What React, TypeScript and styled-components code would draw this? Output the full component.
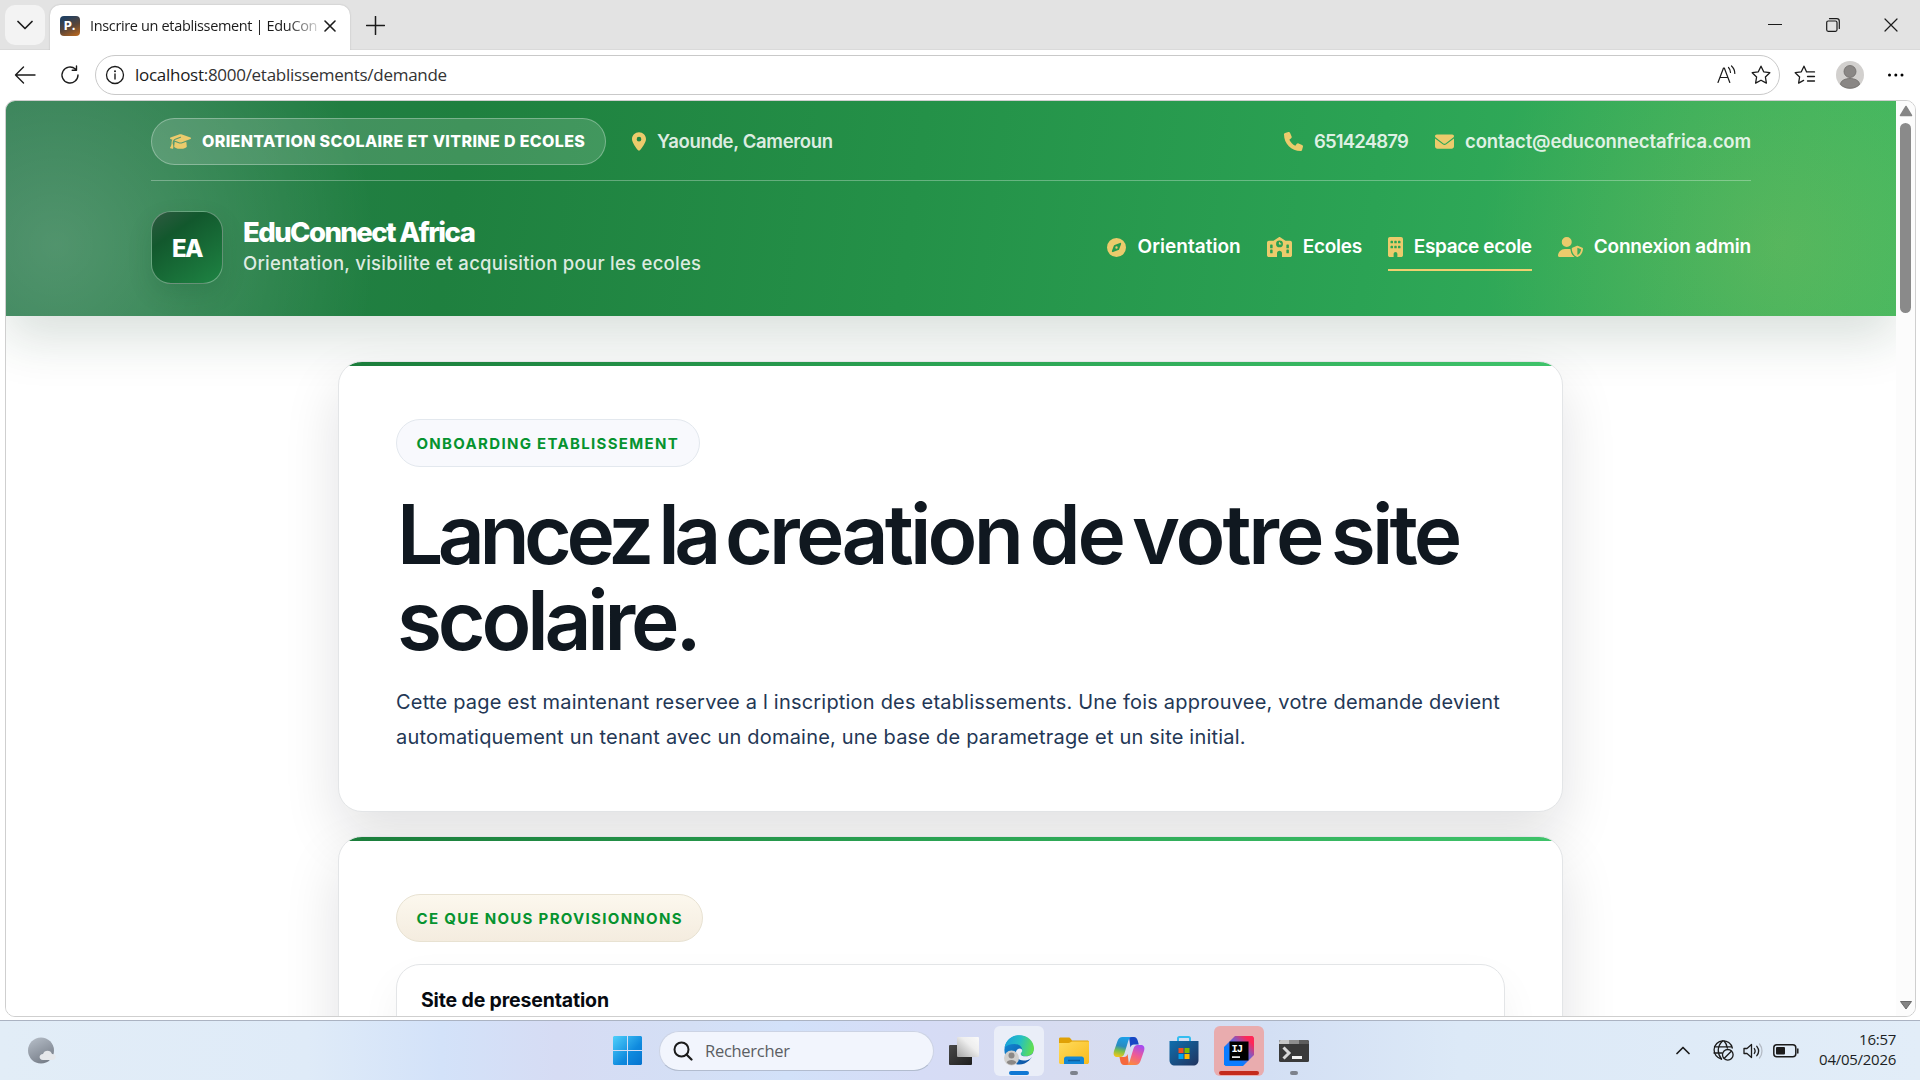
import React from "react";
import styled, { createGlobalStyle } from "styled-components";
import {
  FaGraduationCap,
  FaLocationDot,
  FaPhone,
  FaEnvelope,
  FaCompass,
  FaSchool,
  FaBuilding,
  FaUserShield,
} from "react-icons/fa6";

const GlobalStyle = createGlobalStyle`
  *, *::before, *::after { box-sizing: border-box; }
  body { margin: 0; background: #fff; overflow: hidden; font-family: Inter, sans-serif; }
`;

const ui = `"Open Sans", "Noto Sans", sans-serif`;

const Desktop = styled.div`
  width: 1920px;
  height: 1080px;
  display: flex;
  flex-direction: column;
  overflow: hidden;
`;

const Browser = styled.div`
  height: 1020px;
  display: flex;
  flex-direction: column;
  background: #fff;
`;

/* ---------- tab strip ---------- */
const TabStrip = styled.div`
  height: 50px;
  flex: none;
  display: flex;
  align-items: flex-start;
  background: #e3e3e3;
  border-bottom: 1px solid #dadada;
  padding: 5px 0 0 5px;
`;

const TabMenu = styled.div`
  width: 40px;
  height: 40px;
  border-radius: 10px;
  background: #f3f3f3;
  display: grid;
  place-items: center;
`;

const Tab = styled.div`
  width: 300px;
  height: 45px;
  margin-left: 5px;
  padding: 0 13px 4px 10px;
  border-radius: 10px 10px 0 0;
  background: #fff;
  box-shadow: 0 0 2px rgba(0, 0, 0, 0.2);
  clip-path: inset(-3px -3px 0 -3px);
  display: flex;
  align-items: center;
`;

const Favicon = styled.div`
  width: 20px;
  height: 20px;
  border-radius: 4px;
  background: linear-gradient(155deg, #23405f 15%, #5b4638 55%, #c26a1c 100%);
  color: #fff;
  font: 800 12px/19px Inter, sans-serif;
  display: flex;
  justify-content: center;
  letter-spacing: 0.3px;
`;

const TabTitle = styled.div`
  width: 229px;
  margin-left: 10px;
  white-space: nowrap;
  font: 400 14.5px/22px ${ui};
  letter-spacing: -0.35px;
  color: #1b1b1b;
  mask-image: linear-gradient(90deg, #000 86%, rgba(0, 0, 0, 0.15) 100%);
`;

const TabClose = styled.div`
  width: 14px;
  height: 14px;
  display: grid;
  place-items: center;
  margin-left: 4px;
`;

const NewTab = styled.div`
  width: 20px;
  height: 40px;
  margin-left: 15px;
  display: grid;
  place-items: center;
`;

const WindowControls = styled.div`
  margin-left: auto;
  margin-right: 22px;
  height: 40px;
  display: flex;
  align-items: center;
  gap: 44px;
`;

/* ---------- toolbar ---------- */
const Toolbar = styled.div`
  height: 50px;
  flex: none;
  display: flex;
  align-items: center;
  padding: 0 12px 0 14px;
`;

const ToolIcon = styled.div<{ $w: number; $ml?: number }>`
  width: ${(p) => p.$w}px;
  margin-left: ${(p) => p.$ml ?? 0}px;
  display: flex;
  justify-content: center;
  flex: none;
`;

const AddressBar = styled.div`
  width: 1685px;
  height: 40px;
  margin-left: 15px;
  border: 1px solid #c9c9c9;
  border-radius: 20px;
  display: flex;
  align-items: center;
  padding: 0 8px 0 9px;
`;

const Url = styled.div`
  margin-left: 10px;
  flex: 1;
  font: 400 17px/24px ${ui};
  letter-spacing: -0.28px;
  color: #333;
  span { color: #1a1a1a; }
`;

const Avatar = styled.div`
  width: 28px;
  height: 28px;
  margin-left: 20px;
  flex: none;
`;

/* ---------- page frame ---------- */
const Frame = styled.div`
  margin: 0 4px 0 5px;
  height: 917px;
  border: 1px solid #cfcfcf;
  border-radius: 10px;
  overflow: hidden;
  display: flex;
`;

const Page = styled.main`
  width: 1890px;
  flex: none;
  height: 100%;
  overflow: hidden;
  background: #fff;
`;

const ScrollBar = styled.div`
  flex: 1;
  background: #fcfcfc;
  display: flex;
  flex-direction: column;
  align-items: center;
  padding: 4px 0 6px;
`;

const Thumb = styled.div`
  width: 11px;
  height: 190px;
  margin-top: 6px;
  border-radius: 6px;
  background: #8a8a8a;
`;

const Spacer = styled.div`
  flex: 1;
`;

/* ---------- site header ---------- */
const SiteHeader = styled.header`
  height: 215px;
  padding: 17px 145px 0;
  background:
    radial-gradient(circle at 50px 144px, rgba(255, 255, 255, 0.2), rgba(255, 255, 255, 0) 320px),
    radial-gradient(circle at 1775px 144px, rgba(246, 200, 90, 0.17), rgba(246, 200, 90, 0) 300px),
    linear-gradient(98deg, #27784a 0%, #1f803f 24%, #249148 48%, #2ba354 72%, #34af5c 88%, #3ab760 100%);
  box-shadow: 0 22px 48px rgba(16, 60, 35, 0.16);
`;

const TopBar = styled.div`
  height: 63px;
  display: flex;
  align-items: flex-start;
  border-bottom: 1px solid rgba(255, 255, 255, 0.3);
`;

const Pill = styled.div`
  width: 455px;
  height: 47px;
  border: 1px solid rgba(255, 255, 255, 0.3);
  border-radius: 24px;
  background: rgba(255, 255, 255, 0.15);
  display: flex;
  align-items: center;
  padding: 0 0 1px 18px;
  color: #fff;
  font: 800 16px/20px Inter, sans-serif;
  letter-spacing: 0.36px;
  white-space: nowrap;
`;

const Gold = styled.span<{ $w: number; $h: number }>`
  width: ${(p) => p.$w}px;
  margin-right: 11px;
  display: inline-flex;
  justify-content: center;
  flex: none;
  color: #eccb6c;
  svg {
    width: ${(p) => p.$w}px;
    height: ${(p) => p.$h}px;
  }
`;

const Info = styled.div<{ $ml?: number; $ls: number }>`
  height: 46px;
  margin-left: ${(p) => (p.$ml === undefined ? "auto" : `${p.$ml}px`)};
  display: flex;
  align-items: center;
  color: rgba(255, 255, 255, 0.86);
  font: 600 18.5px/24px Inter, sans-serif;
  letter-spacing: ${(p) => p.$ls}px;
  white-space: nowrap;
`;

const MainBar = styled.div`
  display: flex;
  align-items: center;
  height: 73px;
  margin-top: 30px;
`;

const Logo = styled.div`
  width: 72px;
  height: 73px;
  border-radius: 20px;
  border: 1px solid rgba(255, 255, 255, 0.34);
  background: linear-gradient(145deg, #2f5a41 0%, #12582d 30%, #1e8443 100%);
  box-shadow: 0 10px 24px rgba(8, 60, 30, 0.14);
  color: #fff;
  font: 800 24px/73px Inter, sans-serif;
  letter-spacing: -1.6px;
  text-align: center;
`;

const Brand = styled.div`
  margin-left: 20px;
  margin-top: -1px;
  white-space: nowrap;
`;

const BrandName = styled.div`
  color: #fff;
  font: 800 27.5px/33px Inter, sans-serif;
  letter-spacing: -1.57px;
`;

const BrandTag = styled.div`
  color: rgba(255, 255, 255, 0.85);
  font: 500 18.5px/29px Inter, sans-serif;
  letter-spacing: 0.27px;
`;

const Nav = styled.nav`
  margin-left: auto;
  display: flex;
  gap: 26px;
`;

const NavItem = styled.a<{ $active?: boolean; $ls?: number }>`
  height: 48px;
  display: flex;
  align-items: center;
  padding-top: 3px;
  border-bottom: 2px solid ${(p) => (p.$active ? "#f0d070" : "transparent")};
  margin-top: -2px;
  color: #fff;
  font: 600 19px/24px Inter, sans-serif;
  letter-spacing: ${(p) => p.$ls ?? 0}px;
  white-space: nowrap;
`;

/* ---------- content ---------- */
const Content = styled.section`
  width: 1225px;
  margin: 45px 0 0 332px;
  display: flex;
  flex-direction: column;
  gap: 24px;
`;

const Card = styled.article`
  border: 1px solid #e3e5e7;
  border-radius: 24px;
  background: linear-gradient(90deg, #1b7d3b, #2ba353 50%, #3fc36a) top / 100% 4px no-repeat, #fff;
  box-shadow: 0 24px 56px rgba(15, 20, 25, 0.12);
  padding: 57px 57px 56px;
`;

const Badge = styled.div<{ $warm?: boolean }>`
  width: fit-content;
  height: 48px;
  border: 1px solid ${(p) => (p.$warm ? "#e8e2d2" : "#e3e8ee")};
  border-radius: 24px;
  background: ${(p) => (p.$warm ? "linear-gradient(180deg, #fcf8ee, #f4ecdf)" : "#f8f9fd")};
  padding: 0 ${(p) => (p.$warm ? 19 : 20)}px 0 19.5px;
  color: #06932f;
  font: 700 15px/47px Inter, sans-serif;
  letter-spacing: 1.31px;
`;

const Title = styled.h1`
  margin: 25px 0 21px 1px;
  color: #101820;
  font: 600 82px/86px Inter, sans-serif;
  letter-spacing: -4.2px;
  word-spacing: -7px;
  white-space: nowrap;
`;

const Kern = styled.span<{ $ls: number }>`
  letter-spacing: ${(p) => p.$ls}px;
`;

const Lead = styled.p`
  margin: 0;
  color: #233755;
  font: 400 20px/35px Inter, sans-serif;
  letter-spacing: 0.2px;
  white-space: nowrap;
`;

const Feature = styled.div`
  margin-top: 22px;
  height: 150px;
  border: 1px solid #e3e5e7;
  border-radius: 24px;
  background: #fff;
  box-shadow: 0 18px 40px rgba(15, 20, 25, 0.05);
  padding: 23px 24px;
  color: #060a10;
  font: 700 19.5px/24px Inter, sans-serif;
  letter-spacing: -0.15px;
`;

/* ---------- taskbar ---------- */
const Taskbar = styled.footer`
  height: 60px;
  border-top: 1px solid #abb3c2;
  background: linear-gradient(
    90deg,
    #e2edf7 0%, #dfebf8 16%, #d3e2f9 23%, #d6dcf4 29%, #d4dff5 36%, #d2e1f9 41%,
    #d6dcf6 48%, #d7dcf0 56%, #d3dff4 66%, #dce9f7 76%, #e2edf8 100%
  );
  display: flex;
  align-items: center;
  padding: 0 24px 0 26px;
`;

const Tile = styled.div<{ $bg?: string; $line?: string; $lineW?: number; $ml?: number }>`
  width: 50px;
  height: 50px;
  margin-left: ${(p) => p.$ml ?? 5}px;
  border-radius: 6px;
  background: ${(p) => p.$bg ?? "transparent"};
  display: grid;
  place-items: center;
  position: relative;
  flex: none;
  &::after {
    content: "";
    position: absolute;
    bottom: 1px;
    left: calc(50% - ${(p) => (p.$lineW ?? 0) / 2}px);
    width: ${(p) => p.$lineW ?? 0}px;
    height: 4px;
    border-radius: 2px;
    background: ${(p) => p.$line ?? "transparent"};
  }
`;

const Search = styled.div`
  width: 275px;
  height: 40px;
  margin-left: 7px;
  border: 1px solid #ccd3e4;
  border-bottom-color: #b2bccf;
  border-radius: 20px;
  background: #f2f5fd;
  display: flex;
  align-items: center;
  padding-left: 13px;
  gap: 12px;
  color: #5b5e63;
  font: 400 16.5px/24px ${ui};
  letter-spacing: -0.28px;
`;

const Tray = styled.div`
  margin-left: auto;
  display: flex;
  align-items: center;
`;

const Clock = styled.div`
  width: 97px;
  margin-top: -4px;
  text-align: right;
  color: #1c1f24;
  font: 400 15px/20px ${ui};
  letter-spacing: -0.27px;
`;

const line = { fill: "none", stroke: "#1b1b1b", strokeWidth: 1.5, strokeLinecap: "round", strokeLinejoin: "round" } as const;

const StarPath = "M10 1.2l2.7 5.6 6.1.9-4.4 4.3 1 6.1L10 15.2l-5.4 2.9 1-6.1L1.2 7.7l6.1-.9z";

function EdgeIcon() {
  return (
    <svg width="31" height="31" viewBox="0 0 31 31">
      <defs>
        <linearGradient id="ea" x1="0" y1="0.3" x2="1" y2="0.5">
          <stop offset="0" stopColor="#1aa0dc" />
          <stop offset="0.5" stopColor="#24bfc4" />
          <stop offset="1" stopColor="#63e04c" />
        </linearGradient>
        <linearGradient id="eb" x1="0" y1="0" x2="1" y2="1">
          <stop offset="0" stopColor="#1391dc" />
          <stop offset="1" stopColor="#0c4b9c" />
        </linearGradient>
      </defs>
      <circle cx="15" cy="15" r="14.6" fill="url(#eb)" />
      <path d="M.6 12.5C2 5 8 .3 15.2.3 24 .3 30 6.600 30 13.500c0 5-3.700 7.700-8.200 7.700-3.600 0-5.300-1.400-5-2.700.3-1 1.500-1.600 1.400-3.700C18 11.500 14.700 9 10.500 9 6 9 2.300 10.600.6 12.500z" fill="url(#ea)" />
      <path d="M13.300 14.600c-1.900 2-2 5.400-.3 8 2.600 3.700 9.800 4 14.300.3.900-.7 1.200-.3.600.7C29 21 31 23 31 31l-1-17c0 5-3.700 7.300-8.200 7.300-3.600 0-5.300-1.400-5-2.700.3-1 1.500-1.600 1.400-3-.2-2.400-3-3-4.900-1z" fill="#e9edf7" />
      <circle cx="7.500" cy="23" r="7.500" fill="#d0cfcd" />
      <circle cx="7.500" cy="20.600" r="3" fill="#8b8886" />
      <path d="M2.700 27.500c.6-3.500 9-3.500 9.600 0-2.500 3-7 3-9.600 0z" fill="#8b8886" />
    </svg>
  );
}

function CopilotIcon() {
  return (
    <svg width="32" height="30" viewBox="0 0 32 30">
      <defs>
        <linearGradient id="ca" x1="0.5" y1="0" x2="0.3" y2="1">
          <stop offset="0" stopColor="#1c9fe8" />
          <stop offset="0.45" stopColor="#2a8bc0" />
          <stop offset="0.7" stopColor="#7bbf4a" />
          <stop offset="1" stopColor="#f2c61a" />
        </linearGradient>
        <linearGradient id="cb" x1="0.7" y1="0" x2="0.3" y2="1">
          <stop offset="0" stopColor="#a64cf0" />
          <stop offset="0.5" stopColor="#ef5b94" />
          <stop offset="1" stopColor="#fb8a3c" />
        </linearGradient>
      </defs>
      <path d="M16 1h5c2 0 3 1.500 3.500 3l1.300 4.500H21c-2 0-3 1-3.600 3z" fill="#1747c4" />
      <path d="M16 29h-5c-2 0-3-1.500-3.500-3L6.500 21H11c2 0 3-1 3.600-3z" fill="#f5683c" />
      <path d="M9.500 1H19c-2 0-3 1.600-3.600 3.500L11.600 17c-.8 2.500-2 4-4.300 4H4c-3 0-4-2.500-3-6L4.500 5C5.500 2.300 7 1 9.500 1z" fill="url(#ca)" />
      <path d="M22.500 29H13c2 0 3-1.600 3.600-3.500L20.400 13c.8-2.500 2-4 4.300-4H28c3 0 4 2.500 3 6l-3.500 10c-1 2.700-2.500 4-5 4z" fill="url(#cb)" />
    </svg>
  );
}

export default function App() {
  return (
    <>
      <GlobalStyle />
      <Desktop>
        <Browser>
          <TabStrip>
            <TabMenu>
              <svg width="16" height="10" viewBox="0 0 16 10"><path d="M1 1.500l7 7 7-7" {...line} strokeWidth={1.7} /></svg>
            </TabMenu>
            <Tab>
              <Favicon>P.</Favicon>
              <TabTitle>Inscrire un etablissement | EduCon</TabTitle>
              <TabClose>
                <svg width="12" height="12" viewBox="0 0 12 12"><path d="M1 1l10 10M11 1L1 11" {...line} strokeWidth={1.600} /></svg>
              </TabClose>
            </Tab>
            <NewTab>
              <svg width="19" height="19" viewBox="0 0 19 19"><path d="M9.500.5v18M.5 9.500h18" {...line} /></svg>
            </NewTab>
            <WindowControls>
              <svg width="14" height="14" viewBox="0 0 14 14"><path d="M.5 6.500h13" {...line} strokeWidth={1.200} /></svg>
              <svg width="14" height="14" viewBox="0 0 14 14">
                <rect x=".7" y="3" width="10.300" height="10.300" rx="1.500" {...line} strokeWidth={1.200} />
                <path d="M3.500.7h7.300c1.500 0 2.500 1 2.500 2.500v7.300" {...line} strokeWidth={1.200} />
              </svg>
              <svg width="14" height="14" viewBox="0 0 14 14"><path d="M1 1l12 12M13 1L1 13" {...line} strokeWidth={1.200} /></svg>
            </WindowControls>
          </TabStrip>

          <Toolbar>
            <ToolIcon $w={22}>
              <svg width="22" height="18" viewBox="0 0 22 18"><path d="M21 9H1.500M9.500 1L1.500 9l8 8" {...line} strokeWidth={1.400} /></svg>
            </ToolIcon>
            <ToolIcon $w={20} $ml={24}>
              <svg width="20" height="20" viewBox="0 0 20 20"><path d="M18 10a8 8 0 1 1-2.600-5.900M16.500 1v4.200h-4.300" {...line} strokeWidth={1.400} /></svg>
            </ToolIcon>
            <AddressBar>
              <ToolIcon $w={20}>
                <svg width="20" height="20" viewBox="0 0 20 20">
                  <circle cx="10" cy="10" r="8.500" {...line} strokeWidth={1.300} />
                  <path d="M10 9v5" {...line} strokeWidth={1.400} />
                  <circle cx="10" cy="6.300" r="1" fill="#1b1b1b" />
                </svg>
              </ToolIcon>
              <Url><span>localhost</span>:8000/etablissements/demande</Url>
              <ToolIcon $w={20}>
                <svg width="20" height="20" viewBox="0 0 20 20">
                  <path d="M1 17.500L6.500 3h.8l5.500 14.500M3 12.500h7.800" {...line} strokeWidth={1.200} />
                  <path d="M11.500 2.500c1.300 1.300 2 3 2 5M14.500 1c2.200 2 3.300 4.500 3.300 7.500" {...line} strokeWidth={1.200} />
                </svg>
              </ToolIcon>
              <ToolIcon $w={20} $ml={14}>
                <svg width="20" height="20" viewBox="0 0 20 20"><path d={StarPath} {...line} strokeWidth={1.300} /></svg>
              </ToolIcon>
            </AddressBar>
            <ToolIcon $w={22} $ml={14}>
              <svg width="22" height="20" viewBox="0 0 22 20">
                <path d="M12.500 6.800L10 1.200 7.300 6.800l-6.100.9 4.400 4.300-1 6.100 5-2.700M12.500 6.900h8M13.500 11.500h7M13.500 16h7" {...line} strokeWidth={1.300} />
              </svg>
            </ToolIcon>
            <Avatar>
              <svg width="28" height="28" viewBox="0 0 28 28">
                <circle cx="14" cy="14" r="14" fill="#d2d0ce" />
                <circle cx="14" cy="10.500" r="6" fill="#8a8785" stroke="#6f6c6a" strokeWidth=".8" />
                <path d="M4.500 23.500c0-8 19-8 19 0-5 5-14 5-19 0z" fill="#8a8785" stroke="#6f6c6a" strokeWidth=".8" />
              </svg>
            </Avatar>
            <ToolIcon $w={18} $ml={23}>
              <svg width="18" height="4" viewBox="0 0 18 4">
                <circle cx="2.500" cy="2" r="1.500" /><circle cx="8.800" cy="2" r="1.500" /><circle cx="15" cy="2" r="1.500" />
              </svg>
            </ToolIcon>
          </Toolbar>

          <Frame>
            <Page>
              <SiteHeader>
                <TopBar>
                  <Pill>
                    <Gold $w={21} $h={17}><FaGraduationCap /></Gold>
                    ORIENTATION SCOLAIRE ET VITRINE D ECOLES
                  </Pill>
                  <Info $ml={26} $ls={-0.33}>
                    <Gold $w={14} $h={19}><FaLocationDot /></Gold>
                    Yaounde, Cameroun
                  </Info>
                  <Info $ls={-0.8}>
                    <Gold $w={19} $h={19}><FaPhone /></Gold>
                    651424879
                  </Info>
                  <Info $ml={27} $ls={-0.13}>
                    <Gold $w={19} $h={19}><FaEnvelope /></Gold>
                    contact@educonnectafrica.com
                  </Info>
                </TopBar>
                <MainBar>
                  <Logo>EA</Logo>
                  <Brand>
                    <BrandName>EduConnect Africa</BrandName>
                    <BrandTag>Orientation, visibilite et acquisition pour les ecoles</BrandTag>
                  </Brand>
                  <Nav>
                    <NavItem $ls={0.05}><Gold $w={19} $h={19}><FaCompass /></Gold>Orientation</NavItem>
                    <NavItem $ls={-0.3}><Gold $w={25} $h={20}><FaSchool /></Gold>Ecoles</NavItem>
                    <NavItem $ls={-0.35} $active><Gold $w={15} $h={20}><FaBuilding /></Gold>Espace ecole</NavItem>
                    <NavItem $ls={-0.17}><Gold $w={25} $h={20}><FaUserShield /></Gold>Connexion admin</NavItem>
                  </Nav>
                </MainBar>
              </SiteHeader>
              <Content>
                <Card>
                  <Badge>ONBOARDING ETABLISSEMENT</Badge>
                  <Title>
                    <Kern $ls={-5.5}>Lancez</Kern> <Kern $ls={-5.6}>la</Kern> <Kern $ls={-3.8}>creation</Kern>{" "}
                    <Kern $ls={-3.3}>de</Kern> <Kern $ls={-3.1}>votre</Kern> <Kern $ls={-3.9}>site</Kern>
                    <br />
                    scolaire.
                  </Title>
                  <Lead>
                    Cette page est maintenant reservee a l inscription des etablissements. Une fois approuvee, votre demande devient
                    <br />
                    automatiquement un tenant avec un domaine, une base de parametrage et un site initial.
                  </Lead>
                </Card>
                <Card>
                  <Badge $warm>CE QUE NOUS PROVISIONNONS</Badge>
                  <Feature>Site de presentation</Feature>
                </Card>
              </Content>
            </Page>
            <ScrollBar>
              <svg width="14" height="12" viewBox="0 0 14 12"><path d="M7 1.500L12.500 10.500h-11z" fill="#858585" stroke="#858585" strokeLinejoin="round" strokeWidth="1.500" /></svg>
              <Thumb />
              <Spacer />
              <svg width="14" height="10" viewBox="0 0 14 10"><path d="M7 9L1.500 1.500h11z" fill="#858585" stroke="#6a6a6a" strokeLinejoin="round" strokeWidth="1" /></svg>
            </ScrollBar>
          </Frame>
        </Browser>

        <Taskbar>
          <svg width="32" height="30" viewBox="0 0 32 30">
            <defs>
              <linearGradient id="moon" x1="0.2" y1="0" x2="0.7" y2="1"><stop offset="0" stopColor="#b3bbc5" /><stop offset="1" stopColor="#757c87" /></linearGradient>
            </defs>
            <circle cx="15" cy="14.500" r="13" fill="url(#moon)" />
            <path d="M17 24c-4.500 0-4.500-6 0-6 1-4.500 8-4.500 9 0 5 0 5 6 0 6z" fill="#e6e8eb" />
          </svg>
          <Tile $ml={544}>
            <svg width="29" height="29" viewBox="0 0 29 29">
              <defs>
                <linearGradient id="win" x1="0" y1="0" x2="1" y2="1"><stop offset="0" stopColor="#4fd0fb" /><stop offset="0.6" stopColor="#0f8ade" /><stop offset="1" stopColor="#0573cf" /></linearGradient>
              </defs>
              <path d="M1 0h13v14H0V1zM15 0h13l1 1v13H15zM0 15h14v14H1l-1-1zM15 15h14v13l-1 1H15z" fill="url(#win)" />
            </svg>
          </Tile>
          <Search>
            <svg width="20" height="20" viewBox="0 0 20 20"><circle cx="8.500" cy="8.500" r="7" {...line} strokeWidth={2} /><path d="M13.500 13.500l5 5" {...line} strokeWidth={2.200} /></svg>
            Rechercher
          </Search>
          <Tile>
            <svg width="31" height="30" viewBox="0 0 31 30">
              <defs>
                <linearGradient id="tv" x1="0" y1="0" x2="1" y2="1"><stop offset="0" stopColor="#484848" /><stop offset="1" stopColor="#1e1e1e" /></linearGradient>
                <linearGradient id="tv2" x1="0" y1="1" x2="1" y2="0"><stop offset="0" stopColor="#a5a5a5" /><stop offset="0.6" stopColor="#eeeeee" /><stop offset="1" stopColor="#fafafa" /></linearGradient>
              </defs>
              <rect x="0" y="9" width="23" height="20" rx="1" fill="url(#tv)" />
              <rect x="8" y="1" width="22" height="20" rx="1" fill="url(#tv2)" />
            </svg>
          </Tile>
          <Tile $bg="#eaeef8" $line="#0f78d4" $lineW={20}><EdgeIcon /></Tile>
          <Tile $line="#7d828c" $lineW={8}>
            <svg width="30" height="28" viewBox="0 0 30 28">
              <defs><linearGradient id="fo" x1="0" y1="0" x2="1" y2="1"><stop offset="0" stopColor="#ffdb5c" /><stop offset="1" stopColor="#f9bb1c" /></linearGradient></defs>
              <path d="M0 2C0 1 .5.500 1.500.500h8c1 0 1.600.4 2.200 1.200L13 3.500h16l1 1V10H0z" fill="#e0a106" />
              <path d="M0 6h9.500c1.500 0 2.500-1.500 4-1.500H30v21l-1 1.500H1l-1-1z" fill="url(#fo)" />
              <path d="M5 27v-5c0-1.500.8-2.500 2.500-2.500h15c1.700 0 2.500 1 2.500 2.500v5z" fill="#1287d6" />
              <path d="M9 23.500h12" stroke="#0c5f9f" strokeWidth="1.500" />
            </svg>
          </Tile>
          <Tile><CopilotIcon /></Tile>
          <Tile>
            <svg width="30" height="30" viewBox="0 0 30 30">
              <defs><linearGradient id="st" x1="0" y1="0" x2="1" y2="1"><stop offset="0" stopColor="#0f6fae" /><stop offset="1" stopColor="#21345f" /></linearGradient></defs>
              <path d="M9 6V2.500c0-1 .5-1.500 1.500-1.500h9c1 0 1.500.5 1.500 1.500V6" fill="none" stroke="#35bdf0" strokeWidth="2" />
              <path d="M.5 5h29v19c0 3.500-2 5.500-5.500 5.500H6C2.500 29.500.5 27.500.5 24z" fill="url(#st)" />
              <path d="M9.500 12h5v5h-5z" fill="#f25022" /><path d="M15.500 12h5v5h-5z" fill="#7fba00" />
              <path d="M9.500 18h5v5h-5z" fill="#00a4ef" /><path d="M15.500 18h5v5h-5z" fill="#ffb900" />
            </svg>
          </Tile>
          <Tile $bg="#e9acae" $line="#c42b1c" $lineW={40}>
            <svg width="30" height="30" viewBox="0 0 30 30">
              <defs>
                <linearGradient id="ij" x1="0" y1="1" x2="1" y2="0"><stop offset="0.35" stopColor="#0a7cff" /><stop offset="0.6" stopColor="#7b5cc8" /><stop offset="0.85" stopColor="#fe2857" /></linearGradient>
              </defs>
              <path d="M11 0h17.500L30 1.500V19L19 30H1.500L0 28.500V11z" fill="url(#ij)" />
              <path d="M5.500 5.500h19v19h-19z" fill="#000" />
              <text x="7.500" y="15.500" fill="#fff" fontFamily="Liberation Mono, monospace" fontWeight="700" fontSize="10.500" letterSpacing="-1">IJ</text>
              <path d="M8 20.300h8v1.600H8z" fill="#fff" />
            </svg>
          </Tile>
          <Tile $line="#7d828c" $lineW={8}>
            <svg width="30" height="22" viewBox="0 0 30 22">
              <rect width="30" height="22" rx="1.500" fill="#3a3a3a" />
              <path d="M1.500 0H10v4H0V1.500z" fill="#c4c4c4" /><path d="M10 0h10v4H10z" fill="#8e8e8e" /><path d="M20 0h8.500L30 1.500V4H20z" fill="#5d5d5d" />
              <path d="M4.500 7.500l5.500 5.500-5.500 5.500" fill="none" stroke="#d8d8d8" strokeWidth="3" />
              <path d="M13 16h10v3H13z" fill="#f4f4f4" />
            </svg>
          </Tile>
          <Tray>
            <svg width="14" height="9" viewBox="0 0 14 9"><path d="M1 7.500l6-6 6 6" {...line} strokeWidth={1.700} /></svg>
            <ToolIcon $w={21} $ml={23}>
              <svg width="21" height="21" viewBox="0 0 21 21">
                <g {...line} strokeWidth={1.300}>
                  <path d="M8.500 19A9.200 9.200 0 1 1 19.300 8" /><path d="M9.500 1C4 6.500 4 13.500 8.500 19M11 1c2 2 3 4.300 3.300 7M1.500 6.800h16.800M1 13h8" />
                  <circle cx="14.800" cy="14.800" r="5.300" /><path d="M11.300 18.300l7-7" />
                </g>
              </svg>
            </ToolIcon>
            <ToolIcon $w={20} $ml={9}>
              <svg width="20" height="18" viewBox="0 0 20 18">
                <g {...line} strokeWidth={1.300}><path d="M1 6.500h3L8.500 2.500v13L4 11.500H1z" /><path d="M11.300 6.500c1 1.500 1 3.500 0 5M13.800 4.300c2.200 2.800 2.200 6.600 0 9.400" /><path d="M16.500 2c3.300 4 3.300 10 0 14" stroke="#b5bcc6" /></g>
              </svg>
            </ToolIcon>
            <ToolIcon $w={26} $ml={10}>
              <svg width="26" height="14" viewBox="0 0 26 14">
                <rect x=".8" y=".8" width="22" height="12" rx="3" {...line} /><rect x="3" y="3" width="9" height="7.600" rx="1" fill="#1b1b1b" /><path d="M24.800 5v4" {...line} />
              </svg>
            </ToolIcon>
            <Clock>16:57<br />04/05/2026</Clock>
          </Tray>
        </Taskbar>
      </Desktop>
    </>
  );
}
